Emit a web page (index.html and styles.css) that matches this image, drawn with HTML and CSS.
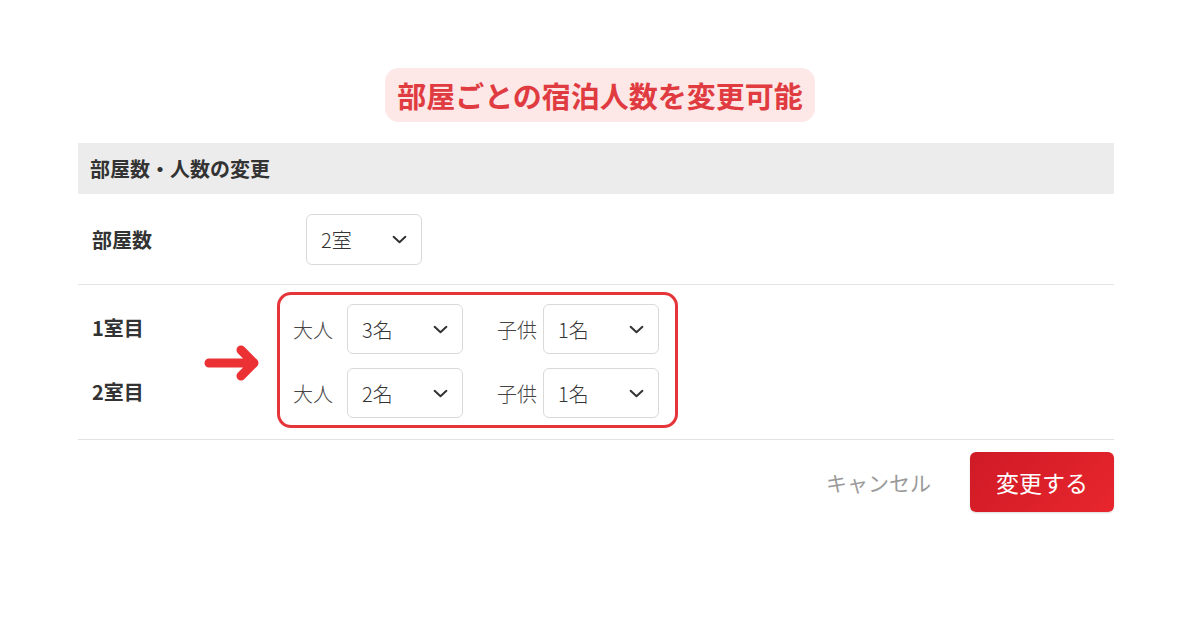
FILE: index.html
```html
<!DOCTYPE html>
<html lang="ja">
<head>
<meta charset="utf-8">
<link rel="stylesheet" href="styles.css">
</head>
<body>
<div class="page">
  <div class="badge-wrap"><div class="badge">部屋ごとの宿泊人数を変更可能</div></div>
  <div class="panel">
    <div class="panel-head">部屋数・人数の変更</div>
    <div class="row rooms">
      <div class="row-label">部屋数</div>
      <div class="select sel-rooms"><span>2室</span><svg class="chev" viewBox="0 0 14 8"><path d="M1.5 1.5 L7 6.5 L12.5 1.5"/></svg></div>
    </div>
    <div class="row guests">
      <div class="room-labels">
        <div class="row-label">1室目</div>
        <div class="row-label">2室目</div>
      </div>
      <svg class="arrow" viewBox="0 0 56 36"><path d="M5 18 H49 M37 5 L50 18 L37 31"/></svg>
      <div class="hl-box">
        <div class="pax-row">
          <span class="pax-label adult">大人</span>
          <div class="select sel-pax"><span>3名</span><svg class="chev" viewBox="0 0 14 8"><path d="M1.5 1.5 L7 6.5 L12.5 1.5"/></svg></div>
          <span class="pax-label child">子供</span>
          <div class="select sel-pax"><span>1名</span><svg class="chev" viewBox="0 0 14 8"><path d="M1.5 1.5 L7 6.5 L12.5 1.5"/></svg></div>
        </div>
        <div class="pax-row">
          <span class="pax-label adult">大人</span>
          <div class="select sel-pax"><span>2名</span><svg class="chev" viewBox="0 0 14 8"><path d="M1.5 1.5 L7 6.5 L12.5 1.5"/></svg></div>
          <span class="pax-label child">子供</span>
          <div class="select sel-pax"><span>1名</span><svg class="chev" viewBox="0 0 14 8"><path d="M1.5 1.5 L7 6.5 L12.5 1.5"/></svg></div>
        </div>
      </div>
    </div>
    <div class="actions">
      <span class="cancel">キャンセル</span>
      <button class="submit">変更する</button>
    </div>
  </div>
</div>
</body>
</html>
```

FILE: styles.css
```css
* { box-sizing: border-box; }
html, body { margin: 0; padding: 0; background: #fff; }
body {
  width: 1200px;
  height: 630px;
  overflow: hidden;
  font-family: "Noto Sans CJK JP", "Noto Sans", sans-serif;
  color: #333;
}
.page { padding-top: 68px; }
.badge-wrap { display: flex; justify-content: center; }
.badge {
  background: #fde7e7;
  color: #e03b40;
  font-weight: 700;
  font-size: 29px;
  line-height: 54px;
  height: 54px;
  padding: 0 12px;
  border-radius: 14px;
}
.panel {
  width: 1036px;
  margin: 21px 0 0 78px;
}
.panel-head {
  background: #ececec;
  height: 51px;
  line-height: 51px;
  padding-left: 12px;
  font-size: 20px;
  font-weight: 700;
  color: #333;
}
.row {
  display: flex;
  align-items: center;
  border-bottom: 1px solid #e3e3e3;
}
.row-label {
  font-size: 20px;
  font-weight: 700;
  color: #333;
}
.rooms {
  height: 91px;
  padding-left: 14px;
}
.rooms .row-label { width: 214px; }
.select {
  display: flex;
  align-items: center;
  justify-content: space-between;
  border: 1px solid #d9d9d9;
  border-radius: 6px;
  background: #fff;
  font-size: 20px;
  font-weight: 300;
  color: #333;
  padding: 0 14px 0 14px;
}
.sel-rooms { width: 116px; height: 51px; }
.sel-pax { width: 116px; height: 50px; }
.chev { width: 15px; height: 9px; fill: none; stroke: #333; stroke-width: 1.9; stroke-linecap: round; stroke-linejoin: round; }
.guests {
  height: 155px;
  padding-left: 14px;
  padding-top: 0;
  align-items: flex-start;
}
.room-labels {
  width: 112px;
  padding-top: 29px;
  display: flex;
  flex-direction: column;
  gap: 36px;
}
.room-labels .row-label { line-height: 28px; }
.arrow {
  width: 56px;
  height: 36px;
  margin-top: 60px;
  fill: none;
  stroke: #ec3135;
  stroke-width: 9;
  stroke-linecap: round;
  stroke-linejoin: round;
}
.hl-box {
  margin-top: 7px;
  margin-left: 17px;
  width: 401px;
  height: 136px;
  border: 3px solid #e5353b;
  border-radius: 14px;
  padding: 9px 0 0 13px;
  display: flex;
  flex-direction: column;
  gap: 14px;
}
.pax-row { display: flex; align-items: center; }
.pax-label { font-size: 20px; font-weight: 300; color: #444; }
.pax-label.adult { width: 54px; }
.pax-label.child { width: 46px; margin-left: 34px; }
.actions {
  display: flex;
  justify-content: flex-end;
  align-items: center;
  padding-top: 12px;
}
.cancel {
  font-size: 21px;
  color: #9a9a9a;
  margin-right: 39px;
}
.submit {
  width: 144px;
  height: 60px;
  border: none;
  border-radius: 6px;
  background: linear-gradient(135deg, #cf1a26 0%, #e8262d 100%);
  color: #fff;
  font-family: "Noto Sans CJK JP", "Noto Sans", sans-serif;
  font-size: 23px;
  box-shadow: 0 1px 2px rgba(0,0,0,0.15);
}
```
